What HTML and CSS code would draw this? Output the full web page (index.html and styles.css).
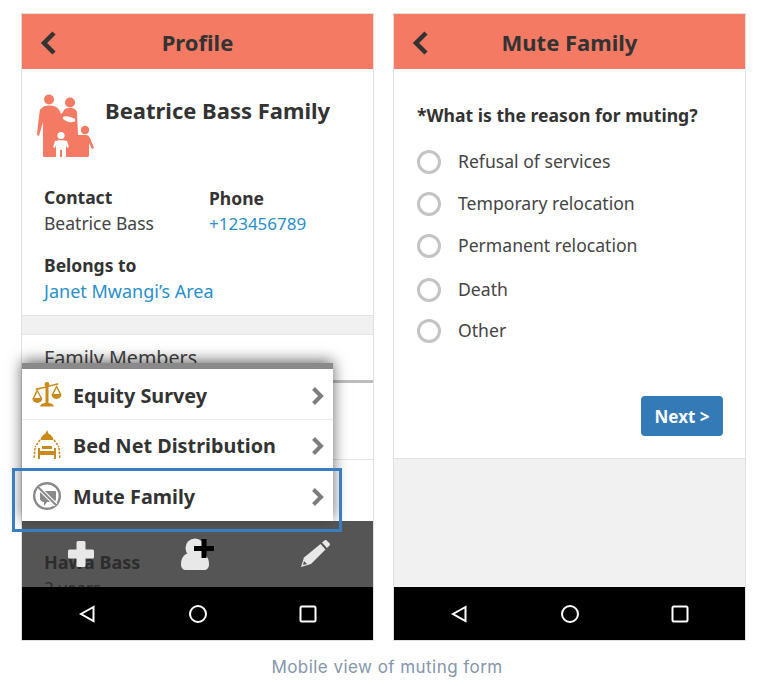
FILE: index.html
```html
<!DOCTYPE html>
<html lang="en">
<head>
  <meta charset="UTF-8" />
  <meta name="viewport" content="width=device-width, initial-scale=1.0"/>
  <title>Mobile view of muting form</title>
  <link rel="stylesheet" href="styles.css">
</head>
<body>
  <div class="phones">
    <div class="phone">
      <div class="header">
        <svg class="back" viewBox="0 0 16 24"><path d="M14 2 4 12l10 10" /></svg>
        <h1>Profile</h1>
      </div>
      <div class="content">
        <div class="card">
          <div class="family-title">
            <svg class="family-icon" width="58" height="66" viewBox="0 0 58 66">
              <g fill="#f47a64">
                <circle cx="12" cy="5.500" r="5"/>
                <circle cx="33" cy="8.500" r="5"/>
                <circle cx="48" cy="36" r="4.200"/>
                <path d="M6 13c3-2 10-2 13 0 2 1 4 4 5 7l2-2c1-3 3-4 7-4s6 1 7 4l1 23h8c2 0 3 1 4 3l4 10-2 1-3-6v12c0 2-1 2-3 2H8c-2 0-2 0-2-2V28L2 42l-2-1c1-10 2-20 3-25 0-1 2-2 3-3z"/>
              </g>
              <g fill="#fff">
                <circle cx="24" cy="41.500" r="3.600"/>
                <path d="M18 47c2-1 10-1 12 0l2 6-2 1-1-3v13h-4v-8h-2v8h-4V51l-1 3-2-1z"/>
                <path d="M26 23c3-2 8 0 10 1 3 0 3 4 0 4-4 1-7-1-10-3z"/>
              </g>
            </svg>
            <h2>Beatrice Bass Family</h2>
          </div>
          <div class="details">
            <div class="detail">
              <strong>Contact</strong>
              <span>Beatrice Bass</span>
            </div>
            <div class="detail detail-phone">
              <strong>Phone</strong>
              <a class="phone-link">+123456789</a>
            </div>
          </div>
          <div class="detail detail-area">
            <strong>Belongs to</strong>
            <a>Janet Mwangi’s Area</a>
          </div>
        </div>
        <div class="members">
          <h3>Family Members</h3>
          <div class="member member-blank"></div>
          <div class="member member-blank"></div>
          <div class="member">
            <strong>Hawa Bass</strong>
            <span>2 years</span>
          </div>
        </div>
      </div>

      <div class="sheet">
        <div class="menu">
          <div class="menu-item">
            <svg class="menu-icon" viewBox="0 0 30 30" fill="#c98a1b">
              <path d="M13.500 4h3v19c2 0 5 1 5.500 3.500H8c.5-2.500 3.500-3.500 5.500-3.500z"/>
              <path d="M3.500 8.500 15 6l11-3 .5 1.600L4 10.200z"/>
              <circle cx="15" cy="4.500" r="2.400"/>
              <path d="M5 9 .8 18h1.600L5.400 12l3 6H10z"/>
              <path d="M.3 18h10c-.3 6.500-9.700 6.500-10 0z"/>
              <path d="M24.500 5 20 14h1.600l3-6 3 6h1.600z"/>
              <path d="M19.500 14h10c-.3 6.500-9.700 6.500-10 0z"/>
            </svg>
            <span>Equity Survey</span>
            <svg class="chevron" viewBox="0 0 14 20"><path d="M2.500 2.500 10 10l-7.500 7.500"/></svg>
          </div>
          <div class="menu-item">
            <svg class="menu-icon" viewBox="0 0 30 30" fill="#c98a1b">
              <path d="M15 0l1.500 3.500c2 1 5 4 5 6.500h-13c0-2.500 3-5.500 5-6.500z"/>
              <path d="M8 10 3 17M22 10l5 7M3 18l-1 11M27 18l1 11" fill="none" stroke="#c98a1b" stroke-width="1.500" stroke-dasharray="2.500 1.200"/>
              <path d="M6 18h2v3h14v-3h2v11h-2v-4H8v4H6z"/>
              <path d="M10 16h10v3H10z"/>
            </svg>
            <span>Bed Net Distribution</span>
            <svg class="chevron" viewBox="0 0 14 20"><path d="M2.500 2.500 10 10l-7.500 7.500"/></svg>
          </div>
          <div class="menu-item">
            <svg class="menu-icon" viewBox="0 0 30 30">
              <circle cx="15" cy="15" r="12.800" fill="none" stroke="#8a8a8a" stroke-width="2.400"/>
              <path d="M9 10h14c1 0 1 1 1 1v7c0 2-2 3-3 3h-6l-3 4v-4c-2 0-4-2-4-3v-7c0-1 1-1 1-1z" fill="#8a8a8a"/>
              <path d="M6.500 6.500 24 24" stroke="#fff" stroke-width="4"/>
              <path d="M6 6l18.500 18.500" stroke="#8a8a8a" stroke-width="2"/>
            </svg>
            <span>Mute Family</span>
            <svg class="chevron" viewBox="0 0 14 20"><path d="M2.500 2.500 10 10l-7.500 7.500"/></svg>
          </div>
        </div>
        <div class="dock">
          <svg viewBox="0 0 26 26" width="26" height="26" fill="#e8e8e8">
            <rect x="8.500" y="0" width="9" height="26" rx="1.500"/>
            <rect x="0" y="8.500" width="26" height="9" rx="1.500"/>
          </svg>
          <svg viewBox="0 0 34 32" width="34" height="32">
            <circle cx="14" cy="10" r="9.500" fill="#e8e8e8"/>
            <path d="M0 26c0-8 5-12 14-12s14 4 14 12c0 4-2 6-5 6H5c-3 0-5-2-5-6z" fill="#e8e8e8"/>
            <path d="M20.500 1h5v7H33v5h-7.500v7h-5v-7H13V8h7.500z" fill="#000"/>
          </svg>
          <svg viewBox="0 0 30 28" width="30" height="28" fill="#e8e8e8">
            <path d="M22 2.500 24.500.5c.8-.6 1.500-.6 2.200 0l2.800 2.800c.6.7.6 1.400 0 2.200L27 8z"/>
            <path d="M20.500 4 25.500 9.500 11 24 1 27l3-9.500z"/>
            <path d="M3 25l1-4 3 3z" fill="#555"/>
          </svg>
        </div>
      </div>
      <div class="highlight"></div>

      <div class="navbar">
        <svg width="18" height="18" viewBox="0 0 18 18"><path d="M15.500 2 3 9l12.500 7z"/></svg>
        <svg width="18" height="18" viewBox="0 0 18 18"><circle cx="9" cy="9" r="8"/></svg>
        <svg width="18" height="18" viewBox="0 0 18 18"><rect x="1.500" y="1.500" width="15" height="15" rx="1.500"/></svg>
      </div>
    </div>

    <div class="phone">
      <div class="header">
        <svg class="back" viewBox="0 0 16 24"><path d="M14 2 4 12l10 10" /></svg>
        <h1>Mute Family</h1>
      </div>
      <div class="content content-form">
        <div class="form">
          <p class="question">*What is the reason for muting?</p>
          <div class="options">
            <label class="option"><span class="radio"></span><span class="option-text">Refusal of services</span></label>
            <label class="option"><span class="radio"></span><span class="option-text">Temporary relocation</span></label>
            <label class="option"><span class="radio"></span><span class="option-text">Permanent relocation</span></label>
            <label class="option option-death"><span class="radio"></span><span class="option-text">Death</span></label>
            <label class="option option-other"><span class="radio"></span><span class="option-text">Other</span></label>
          </div>
          <div class="form-actions">
            <button class="next">Next &gt;</button>
          </div>
        </div>
      </div>
      <div class="navbar">
        <svg width="18" height="18" viewBox="0 0 18 18"><path d="M15.500 2 3 9l12.500 7z"/></svg>
        <svg width="18" height="18" viewBox="0 0 18 18"><circle cx="9" cy="9" r="8"/></svg>
        <svg width="18" height="18" viewBox="0 0 18 18"><rect x="1.500" y="1.500" width="15" height="15" rx="1.500"/></svg>
      </div>
    </div>
  </div>
  <p class="caption">Mobile view of muting form</p>
</body>
</html>
```

FILE: styles.css
```css
body {
  margin: 0;
  background: #fff;
  font-family: "Noto Sans", Arial, sans-serif;
  color: #333;
  height: 686px;
  overflow: hidden;
}

.phones {
  display: flex;
  gap: 19px;
  padding: 13px 0 0 21px;
}

.phone {
  position: relative;
  width: 351px;
  height: 626px;
  border: 1px solid #e0e0e0;
  display: flex;
  flex-direction: column;
  background: #f1f1f1;
}

.header {
  position: relative;
  height: 55px;
  flex: none;
  background: #f47a64;
  display: flex;
  align-items: center;
  justify-content: center;
}

.header h1 {
  margin: 0;
  font-size: 22px;
  font-weight: 700;
  color: #333;
}

.back {
  position: absolute;
  left: 18px;
  top: 17px;
  width: 16px;
  height: 24px;
  fill: none;
  stroke: #333;
  stroke-width: 4.500;
}

.content {
  flex: 1;
  overflow: hidden;
}

.card {
  background: #fff;
  border-bottom: 1px solid #e2e2e2;
  height: 246px;
  padding-left: 22px;
}

.family-title {
  display: flex;
  align-items: flex-start;
  padding-top: 25px;
  margin-left: -7px;
  height: 70px;
}

.family-icon {
  flex: none;
  margin-right: 10px;
}

.family-title h2 {
  margin: 1px 0 0;
  font-size: 22px;
  font-weight: 700;
  line-height: 30px;
}

.details {
  display: flex;
  margin-top: 20px;
}

.detail {
  display: flex;
  flex-direction: column;
  font-size: 17.500px;
  line-height: 26px;
  color: #444;
}

.detail:first-child {
  width: 165px;
}

.detail strong {
  color: #333;
}

.detail a {
  color: #2a8fc9;
  font-size: 18px;
}

.detail .phone-link {
  font-size: 17px;
}

.detail-phone {
  padding-top: 1px;
}

.detail-area {
  margin-top: 15px;
}

.members {
  margin-top: 18px;
  background: #fff;
  border-top: 1px solid #e6e6e6;
  height: 400px;
}

.members h3 {
  margin: 0;
  padding: 9px 22px 8px;
  font-size: 19.700px;
  line-height: 28px;
  font-weight: 400;
  color: #444;
  border-bottom: 3px solid #bdbdbd;
}

.member {
  padding: 0 22px;
  border-bottom: 1px solid #e6e6e6;
  display: flex;
  flex-direction: column;
  font-size: 17px;
  line-height: 26px;
}

.member-blank {
  height: 76px;
}

.member-blank + .member-blank {
  height: 89px;
  border-bottom: none;
}

.member strong {
  font-size: 18px;
}

.sheet {
  position: absolute;
  left: 0;
  right: 0;
  bottom: 53px;
}

.menu {
  width: 311px;
  background: #fff;
  border-top: 6px solid #8a8a8a;
  box-shadow: 0 -2px 14px rgba(0, 0, 0, 0.6);
  position: relative;
}

.menu-item {
  height: 50px;
  display: flex;
  align-items: center;
  padding: 0 8px 0 10px;
  font-size: 19.800px;
  font-weight: 700;
  color: #333;
  border-bottom: 1px solid #ececec;
}

.menu-item:first-child {
  height: 48px;
  padding-top: 2px;
}

.menu-item:last-child {
  border-bottom: none;
}

.menu-icon {
  width: 30px;
  height: 30px;
  flex: none;
  margin-right: 11px;
}

.menu-item span {
  flex: 1;
}

.chevron {
  width: 14px;
  height: 20px;
  margin-top: 2px;
  fill: none;
  stroke: #7d7d7d;
  stroke-width: 4;
}

.dock {
  height: 66px;
  background: rgba(43, 43, 43, 0.8);
  display: grid;
  grid-template-columns: repeat(3, 1fr);
  align-items: center;
  justify-items: center;
  position: relative;
}

.highlight {
  position: absolute;
  left: -10px;
  top: 454px;
  width: 324px;
  height: 58px;
  border: 3px solid #3a7dc0;
}

.navbar {
  height: 53px;
  flex: none;
  background: #000;
  display: flex;
  justify-content: space-between;
  align-items: center;
  padding: 0 56px;
  position: relative;
}

.navbar svg {
  fill: none;
  stroke: #fff;
  stroke-width: 2;
}

.form {
  background: #fff;
  border-bottom: 1px solid #e2e2e2;
  height: 390px;
  padding: 32px 22px 0 23px;
  box-sizing: border-box;
}

.question {
  margin: 0;
  font-size: 17.600px;
  line-height: 28px;
  font-weight: 700;
  color: #333;
}

.options {
  margin-top: 12px;
}

.option {
  display: flex;
  align-items: center;
  height: 42px;
  font-size: 17.600px;
  color: #444;
}

.option-text {
  margin-bottom: 2px;
}

.option-death {
  margin-top: 2px;
}

.option-other {
  margin-top: -1px;
}

.radio {
  width: 24px;
  height: 24px;
  border: 3px solid #c4c4c4;
  border-radius: 50%;
  box-sizing: border-box;
  margin-right: 17px;
}

.form-actions {
  display: flex;
  justify-content: flex-end;
  margin-top: 44px;
}

.next {
  width: 82px;
  height: 40px;
  background: #337ab7;
  color: #fff;
  border: none;
  border-radius: 4px;
  font-family: inherit;
  font-size: 17px;
  font-weight: 700;
}

.caption {
  margin: 14px 0 0;
  padding-left: 16px;
  text-align: center;
  font-family: Inter, sans-serif;
  font-size: 17px;
  letter-spacing: 0.45px;
  line-height: 24px;
  color: #8496ab;
}
```
